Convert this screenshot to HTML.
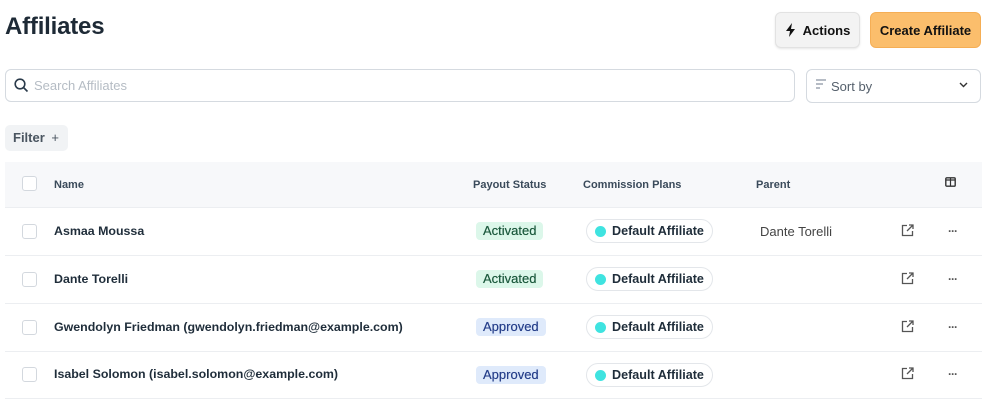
<!DOCTYPE html>
<html><head><style>
*{box-sizing:border-box;margin:0;padding:0}
body{width:1000px;height:400px;background:#fff;font-family:"Liberation Sans",sans-serif;color:#1f2d3a;position:relative;overflow:hidden}
.a{position:absolute}
h1{position:absolute;left:5px;top:13px;font-size:24px;font-weight:bold;color:#1e2a36;letter-spacing:-0.2px}
.btn{position:absolute;top:12px;height:36px;border-radius:6px;font-size:13px;font-weight:bold;display:flex;align-items:center;justify-content:center;color:#111}
.inp{position:absolute;border:1px solid #d5dae0;border-radius:6px;background:#fff}
.th{position:absolute;top:179px;font-size:11px;font-weight:bold;color:#3a4a5a}
.cb{position:absolute;left:22px;width:15px;height:15px;border:1px solid #d3d8de;border-radius:3px;background:#fff}
.row{position:absolute;left:5px;width:977px;height:48px;border-bottom:1px solid #eceef1}
.nm{position:absolute;left:54px;font-size:12.4px;font-weight:bold;color:#1f2d3a}
.bd{position:absolute;left:476px;height:18px;padding:0 7px;border-radius:4px;font-size:13px;line-height:18px;text-shadow:0 0 0.4px currentColor}
.act{background:#dcf7ea;color:#1d5a3e}
.apr{background:#dfeafb;color:#27408b}
.pill{position:absolute;left:586px;width:127px;height:24px;border:1px solid #e3e6ea;border-radius:12px;font-size:12.6px;font-weight:bold;line-height:22px;padding-left:25px;color:#1f2d3a}
.pill:before{content:"";position:absolute;left:8px;top:6px;width:11px;height:11px;border-radius:50%;background:#3fe3e0}
.dots{position:absolute;left:948px;font-size:12px;font-weight:bold;color:#555;letter-spacing:-1px}
</style></head><body>
<h1>Affiliates</h1>
<div class="btn" style="left:775px;width:85px;background:#f3f3f3;border:1px solid #e2e2e2;box-shadow:0 1px 2px rgba(0,0,0,.1)"><svg width="12" height="14" viewBox="0 0 12 14" style="margin-right:6px"><path d="M7 0L1 8h4l-1 6 6-8H6z" fill="#111"/></svg>Actions</div>
<div class="btn" style="left:870px;width:111px;background:#fbbe6c;border:1px solid #f5ae55">Create Affiliate</div>
<div class="inp" style="left:5px;top:69px;width:790px;height:33px"></div>
<svg class="a" style="left:14px;top:78px" width="15" height="15" viewBox="0 0 15 15"><circle cx="6" cy="6" r="4.8" fill="none" stroke="#2a3a4a" stroke-width="1.6"/><path d="M9.5 9.5L13.5 13.5" stroke="#2a3a4a" stroke-width="1.6"/></svg>
<div class="a" style="left:34px;top:78px;font-size:13px;color:#b5bcc4">Search Affiliates</div>
<div class="inp" style="left:806px;top:69px;width:175px;height:34px"></div>
<svg class="a" style="left:816px;top:79px" width="10" height="12" viewBox="0 0 10 12"><path d="M0 1h10M0 5h7M0 9h4" stroke="#8a95a2" stroke-width="1.2"/></svg>
<div class="a" style="left:831px;top:79px;font-size:13px;color:#55606c">Sort by</div>
<svg class="a" style="left:959px;top:82px" width="9" height="6" viewBox="0 0 9 6"><path d="M1 1l3.5 3.5L8 1" fill="none" stroke="#333" stroke-width="1.4"/></svg>
<div class="a" style="left:5px;top:125px;width:63px;height:26px;background:#f1f3f5;border-radius:5px;font-size:13px;font-weight:bold;color:#4a5560;line-height:26px;padding-left:8px">Filter <span style="font-weight:normal;margin-left:3px">+</span></div>
<div class="a" style="left:5px;top:162px;width:977px;height:46px;background:#f7f8fa;border-bottom:1px solid #eceef1"></div>
<div class="cb" style="top:176px"></div>
<div class="th" style="left:54px">Name</div>
<div class="th" style="left:473px">Payout Status</div>
<div class="th" style="left:583px">Commission Plans</div>
<div class="th" style="left:756px">Parent</div>
<svg class="a" style="left:945px;top:177px" width="11" height="10" viewBox="0 0 11 10"><rect x="0.8" y="0.8" width="9.4" height="8.4" rx="1" fill="none" stroke="#333" stroke-width="1.4"/><path d="M5.5 1v8M1 3h9" stroke="#333" stroke-width="1.2"/></svg>

<div class="row" style="top:208px"></div>
<div class="row" style="top:256px"></div>
<div class="row" style="top:304px"></div>
<div class="row" style="top:351px"></div>

<div class="cb" style="top:224px"></div><div class="nm" style="top:224px">Asmaa Moussa</div>
<div class="bd act" style="top:222px">Activated</div><div class="pill" style="top:219px">Default Affiliate</div>
<div class="a" style="left:760px;top:224px;font-size:13px;color:#444">Dante Torelli</div>

<div class="cb" style="top:272px"></div><div class="nm" style="top:272px">Dante Torelli</div>
<div class="bd act" style="top:270px">Activated</div><div class="pill" style="top:267px">Default Affiliate</div>

<div class="cb" style="top:320px"></div><div class="nm" style="top:320px">Gwendolyn Friedman (gwendolyn.friedman@example.com)</div>
<div class="bd apr" style="top:318px">Approved</div><div class="pill" style="top:315px">Default Affiliate</div>

<div class="cb" style="top:367px"></div><div class="nm" style="top:367px">Isabel Solomon (isabel.solomon@example.com)</div>
<div class="bd apr" style="top:366px">Approved</div><div class="pill" style="top:363px">Default Affiliate</div>

<svg class="a" style="left:901px;top:224px" width="13" height="13" viewBox="0 0 13 13"><path d="M6 1.5H1.5v10h10V7M8 1h4v4M12 1L6 7" fill="none" stroke="#555" stroke-width="1.3"/></svg>
<svg class="a" style="left:901px;top:272px" width="13" height="13" viewBox="0 0 13 13"><path d="M6 1.5H1.5v10h10V7M8 1h4v4M12 1L6 7" fill="none" stroke="#555" stroke-width="1.3"/></svg>
<svg class="a" style="left:901px;top:320px" width="13" height="13" viewBox="0 0 13 13"><path d="M6 1.5H1.5v10h10V7M8 1h4v4M12 1L6 7" fill="none" stroke="#555" stroke-width="1.3"/></svg>
<svg class="a" style="left:901px;top:367px" width="13" height="13" viewBox="0 0 13 13"><path d="M6 1.5H1.5v10h10V7M8 1h4v4M12 1L6 7" fill="none" stroke="#555" stroke-width="1.3"/></svg>
<div class="dots" style="top:224px">···</div>
<div class="dots" style="top:272px">···</div>
<div class="dots" style="top:320px">···</div>
<div class="dots" style="top:367px">···</div>
</body></html>
